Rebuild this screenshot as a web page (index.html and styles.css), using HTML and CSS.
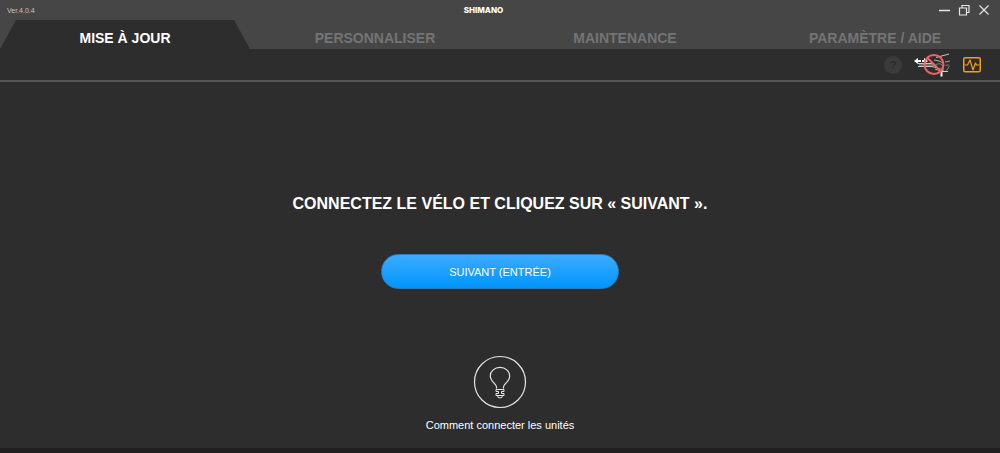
FILE: index.html
```html
<!DOCTYPE html>
<html lang="fr">
<head>
    <meta charset="UTF-8">
    <meta name="viewport" content="width=device-width, initial-scale=1.0">
    <title>SHIMANO</title>
    <link rel="stylesheet" href="styles.css">
</head>
<body>
    <header class="top">
        <div class="titlebar">
            <span class="version">Ver.4.0.4</span>
            <span class="logo">SHIMANO</span>
            <div class="window-buttons">
                <button type="button" aria-label="Réduire">
                    <svg width="12" height="12" viewBox="0 0 12 12" fill="none" stroke="currentColor" stroke-width="1.5">
                        <path d="M1 6.5h11"></path>
                    </svg>
                </button>
                <button type="button" aria-label="Agrandir">
                    <svg width="12" height="12" viewBox="0 0 12 12" fill="none" stroke="currentColor" stroke-width="1.2">
                        <path d="M1.5 4h7v7h-7zM4 4V1.5h7v7H8.5"></path>
                    </svg>
                </button>
                <button type="button" aria-label="Fermer">
                    <svg width="12" height="12" viewBox="0 0 12 12" fill="none" stroke="currentColor" stroke-width="1.2">
                        <path d="M1.5 1.5l9 9M10.5 1.5l-9 9"></path>
                    </svg>
                </button>
            </div>
        </div>
        <nav class="tabs">
            <a class="tab active" href="#">MISE À JOUR</a>
            <a class="tab" href="#">PERSONNALISER</a>
            <a class="tab" href="#">MAINTENANCE</a>
            <a class="tab" href="#">PARAMÈTRE / AIDE</a>
        </nav>
    </header>

    <div class="toolbar">
        <button type="button" class="help" disabled>?</button>
        <button type="button" aria-label="Vélo non connecté">
            <svg width="37" height="24" viewBox="0 0 37 24" fill="none">
                <!-- bike frame and derailleur -->
                <path d="M22 4.500L35 1" stroke="#c8c8c8"></path>
                <path d="M31 9l5-1" stroke="#a0a0a0"></path>
                <path d="M20 7q5 0 10 3.500M21 16q5 2.500 9 1" stroke="#b0b0b0"></path>
                <path d="M20 13q5-4 8-1t-4 4M31.500 12.500q4-1.500 3.500 1t-3 4" stroke="#808080"></path>
                <path d="M27.500 17.500v6" stroke="#fff" stroke-width="2"></path>
                <path d="M28 18.500h6" stroke="#d0d0d0"></path>
                <!-- cable and plug -->
                <path d="M4 10.500h13l4 1M4 13.500h14l4 1" stroke="#c8c8c8"></path>
                <path d="M5 12h15" stroke="#858585" stroke-width="1.500"></path>
                <path d="M0 8l4-3v2h3v2H4v2zM14 8l-4-3v2H8v2h2v2z" fill="#fff"></path>
                <!-- no entry sign -->
                <circle cx="20" cy="11.500" r="9.500" stroke="#f06264" stroke-width="2"></circle>
                <path d="M13.500 5l13 13" stroke="#f06264" stroke-width="2"></path>
            </svg>
        </button>
        <button type="button" aria-label="Diagnostic">
            <svg width="18" height="16" viewBox="0 0 18 16" fill="none" stroke="#f0a020" stroke-linejoin="round">
                <rect x=".75" y=".75" width="16.500" height="14" rx="1.500" stroke-width="1.500"></rect>
                <path d="M1.500 8H4.500L7 3l3 10 2.500-7 1 2H16.500" stroke-width="1.200"></path>
            </svg>
        </button>
    </div>

    <main>
        <h1>CONNECTEZ LE VÉLO ET CLIQUEZ SUR « SUIVANT ».</h1>
        <button type="button" class="next">SUIVANT (ENTRÉE)</button>
        <a class="hint" href="#">
            <svg width="54" height="54" viewBox="0 0 54 54" fill="none" stroke="#e6e6e6">
                <circle cx="27" cy="27" r="25.500" stroke-width="1.200"></circle>
                <path d="M23.500 33.500v-1.500c0-3-6.200-5.500-6.200-11a9.700 8.700 0 0 1 19.400 0c0 5.500-6.200 8-6.200 11v1.500" stroke-width="1.200"></path>
                <path d="M23 34.500h8v2h-2.500v2H31v2h-8v-2h2.500v-2H23zM24.500 40.500q0 2.500 2.500 2.500t2.500-2.500"></path>
            </svg>
            <span>Comment connecter les unités</span>
        </a>
    </main>

    <footer class="bottom-bar"></footer>
</body>
</html>
```

FILE: styles.css
```css
* {
    box-sizing: border-box;
}

body {
    display: flex;
    flex-direction: column;
    min-height: 100vh;
    margin: 0;
    background: #2d2d2d;
    color: #fff;
    font-family: "Liberation Sans", Arial, sans-serif;
}

button {
    padding: 0;
    border: none;
    background: none;
    color: inherit;
    font-family: inherit;
    cursor: pointer;
}

a {
    color: inherit;
    text-decoration: none;
}

svg {
    display: block;
}

.top {
    background: #464646;
}

.titlebar {
    display: grid;
    grid-template-columns: 1fr auto 1fr;
    align-items: center;
    height: 20px;
    padding: 0 10px 0 7px;
}

.version {
    color: #c4c4c4;
    font-size: 7px;
}

.logo {
    padding-right: 30px;
    font-family: Inter, sans-serif;
    font-size: 8px;
    font-weight: 800;
}

.window-buttons {
    display: flex;
    justify-content: flex-end;
    gap: 8px;
    color: #e6e6e6;
}

.tabs {
    display: grid;
    grid-template-columns: repeat(4, 1fr);
}

.tab {
    height: 29px;
    padding-top: 8px;
    color: #747474;
    font-size: 14px;
    font-weight: bold;
    line-height: 20px;
    text-align: center;
}

.tab.active {
    background: #2d2d2d;
    color: #fff;
    clip-path: polygon(16px 0, calc(100% - 16px) 0, 100% 100%, 0 100%);
}

.toolbar {
    display: flex;
    align-items: center;
    justify-content: flex-end;
    gap: 12px;
    height: 33px;
    padding-right: 19px;
    border-bottom: 2px solid #555;
}

.help {
    width: 18px;
    height: 18px;
    border-radius: 50%;
    background: #3b3b3b;
    color: #2a2a2a;
    font-size: 11px;
    font-weight: bold;
}

main {
    flex: 1;
    display: flex;
    flex-direction: column;
    align-items: center;
    padding-top: 112px;
}

h1 {
    margin: 0 0 40px;
    font-size: 16px;
    line-height: 20px;
}

.next {
    width: 238px;
    height: 35px;
    margin-bottom: 66px;
    border: 1px solid #2b7cb8;
    border-radius: 18px;
    background: linear-gradient(#3cabff, #0095ff);
    font-size: 11px;
}

.hint {
    display: flex;
    flex-direction: column;
    align-items: center;
    gap: 8px;
    font-size: 11px;
    line-height: 16px;
}

.bottom-bar {
    height: 5px;
    background: #221f20;
}
```
